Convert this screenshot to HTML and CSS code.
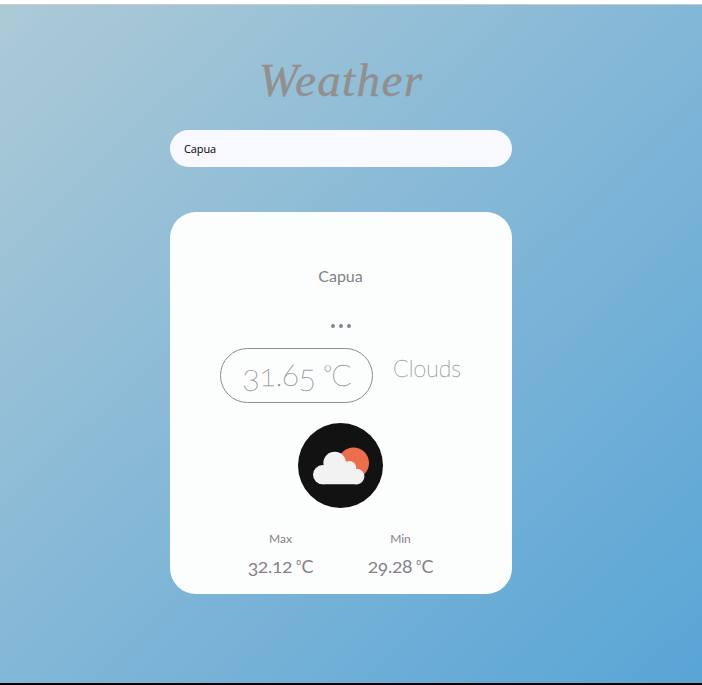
FILE: index.html
```html
<!DOCTYPE html>
<html lang="en">
<head>
<meta charset="utf-8">
<title>Weather</title>
<link rel="stylesheet" href="styles.css">
</head>
<body>
<main class="app">
  <h1 class="title">Weather</h1>
  <input class="search" type="text" value="Capua" aria-label="City">
  <section class="card">
    <h2 class="city">Capua</h2>
    <div class="dots"><i></i><i></i><i></i></div>
    <div class="now">
      <div class="temp"><span class="low">3</span><span class="short">1</span>.6<span class="low">5</span> <span class="deg">°</span>C</div>
      <div class="sky">Clouds</div>
    </div>
    <svg class="icon" viewBox="0 0 85 85">
      <circle cx="42.5" cy="42.5" r="42.5" fill="#121212"/>
      <circle cx="55.5" cy="40" r="15.5" fill="#ec6e4c"/>
      <g fill="#f2f2f2">
        <circle cx="24.6" cy="51.7" r="9.6"/>
        <circle cx="36.7" cy="40" r="11.3"/>
        <circle cx="51.5" cy="44.5" r="6.6"/>
        <circle cx="58.6" cy="53.6" r="7.8"/>
        <path d="M24.6 61.3V43H52l6.6 5v13.3z"/>
      </g>
    </svg>
    <div class="range">
      <div class="bound"><div class="label">Max</div><div class="value"><span class="low">3</span><span class="short">2</span>.<span class="short">12</span> <span class="deg">°</span>C</div></div>
      <div class="bound"><div class="label">Min</div><div class="value"><span class="short">2</span><span class="low">9</span>.<span class="short">2</span>8 <span class="deg">°</span>C</div></div>
    </div>
  </section>
</main>
</body>
</html>
```
FILE: styles.css
```css
* { box-sizing: border-box; }
body {
  margin: 0;
  height: 685px;
  overflow: hidden;
  border-top: 4px solid #fff;
  border-bottom: 2px solid #000;
  font-family: Lato, sans-serif;
  color: #85808a;
}
.app {
  height: 679px;
  padding: 47px 20px 0 0;
  border-top: 1px solid #c9cdd0;
  background: linear-gradient(to bottom right, #adcad6, #83b7d7 50%, #58a5d6);
  display: flex;
  flex-direction: column;
  align-items: center;
}
.title {
  margin: 0;
  height: 78px;
  font: italic 400 47px/56px "Liberation Serif", serif;
  letter-spacing: 1.4px;
  color: #918f8f;
  -webkit-text-stroke: .4px #918f8f;
}
.search {
  width: 342px;
  height: 37px;
  flex: none;
  border: 0;
  border-radius: 19px;
  padding: 0 14px;
  background: #f8f9ff;
  color: #000;
  font: 11px "Open Sans", sans-serif;
  letter-spacing: -.1px;
  outline: 0;
}
.card {
  width: 342px;
  height: 382px;
  margin-top: 45px;
  padding-right: 1px;
  border-radius: 26px;
  background: #fbfefd;
  display: flex;
  flex-direction: column;
  align-items: center;
}
.city {
  margin: 54px 0 0;
  font-size: 16px;
  font-weight: 400;
  line-height: 20px;
}
.dots { display: flex; gap: 4px; margin-top: 38px; }
.dots i { width: 4px; height: 4px; border-radius: 50%; background: #85808f; }
.now { display: flex; margin-top: 20px; gap: 20px; }
.temp {
  width: 153px;
  height: 55px;
  border: 1px solid #918b8e;
  border-radius: 28px;
  text-align: center;
  font-size: 30px;
  font-weight: 100;
  line-height: 51px;
  letter-spacing: -.7px;
  white-space: nowrap;
  -webkit-text-stroke: .35px #9997a5;
}
.low, .short, .deg { display: inline-block; line-height: 1; }
.low { transform: translateY(.17em); }
.short { transform: scaleY(.82); transform-origin: 50% 85%; }
.deg { transform: scale(.72); transform-origin: 100% 25%; margin-left: -.12em; }
.sky {
  font-size: 23px;
  font-weight: 100;
  line-height: 40px;
  -webkit-text-stroke: .35px #9997a5;
}
.icon { width: 85px; height: 85px; margin-top: 20px; }
.range { display: flex; width: 240px; margin-top: 22px; }
.bound { flex: 1; text-align: center; }
.label { font-size: 12px; line-height: 18px; }
.value { font-size: 18px; line-height: 26px; margin-top: 5px; letter-spacing: -.3px; }
```
